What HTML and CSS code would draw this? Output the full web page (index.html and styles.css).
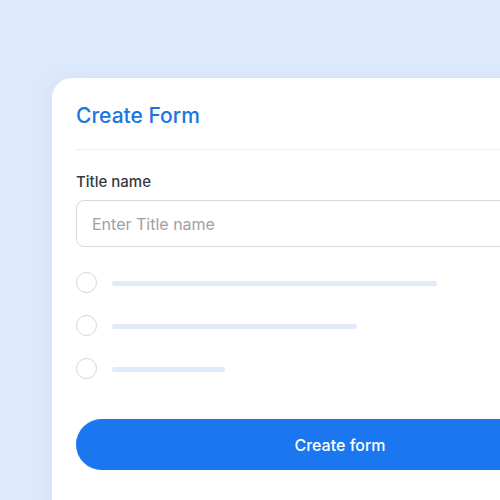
FILE: index.html
```html
<!DOCTYPE html>
<html>
<head>
<meta charset="utf-8">
<link rel="stylesheet" href="styles.css">
</head>
<body>
<div class="stage">
  <div class="card">
    <h1 class="title">Create Form</h1>
    <div class="divider"></div>
    <label class="label">Title name</label>
    <div class="input">Enter Title name</div>
    <div class="options">
      <div class="option"><span class="radio"></span><span class="bar" style="width:325px"></span></div>
      <div class="option"><span class="radio"></span><span class="bar" style="width:245px"></span></div>
      <div class="option"><span class="radio"></span><span class="bar" style="width:113px"></span></div>
    </div>
    <button class="button">Create form</button>
  </div>
</div>
</body>
</html>
```
FILE: styles.css
```css
html, body {
  margin: 0;
  padding: 0;
  width: 500px;
  height: 500px;
  overflow: hidden;
  background: #dde9fc;
  font-family: Inter, "Noto Sans", sans-serif;
}
.stage {
  padding: 78px 0 0 52px;
}
.card {
  width: 576px;
  height: 480px;
  background: #ffffff;
  border-radius: 20px;
  padding: 0 24px;
  box-sizing: border-box;
  display: flex;
  flex-direction: column;
  box-shadow: 0 4px 20px rgba(120, 150, 200, 0.12);
}
.title {
  margin: 26px 0 0 0;
  font-size: 21px;
  line-height: 24px;
  font-weight: 500;
  color: #1b74e4;
}
.divider {
  height: 1px;
  background: #eeeff1;
  margin-top: 21px;
  margin-right: -24px;
}
.label {
  margin-top: 22px;
  font-size: 15px;
  line-height: 20px;
  font-weight: 500;
  color: #353a42;
}
.input {
  margin-top: 8px;
  height: 47px;
  box-sizing: border-box;
  border: 1px solid #d6d8db;
  border-radius: 8px;
  padding: 0 15px;
  display: flex;
  align-items: center;
  font-size: 16px;
  color: #9da1a7;
}
.options {
  margin-top: 25px;
  display: flex;
  flex-direction: column;
  gap: 22px;
}
.option {
  display: flex;
  align-items: center;
  height: 21px;
}
.radio {
  width: 21px;
  height: 21px;
  box-sizing: border-box;
  border: 1.5px solid #d3d5d8;
  border-radius: 50%;
  flex: none;
}
.bar {
  margin-left: 15px;
  height: 5px;
  border-radius: 3px;
  background: #dfeafb;
  margin-top: 2px;
}
.button {
  margin-top: 40px;
  height: 51px;
  border: none;
  border-radius: 26px;
  background: #1a77ef;
  color: #ffffff;
  font-family: Inter, "Noto Sans", sans-serif;
  font-size: 16px;
  font-weight: 500;
  width: 100%;
}
```
